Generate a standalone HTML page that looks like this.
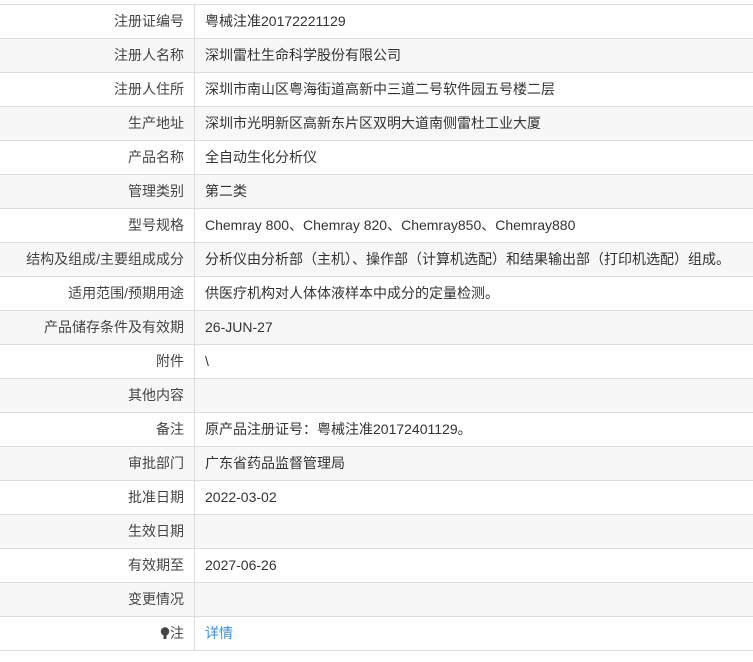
<!DOCTYPE html>
<html><head><meta charset="utf-8"><style>
body{margin:0;background:#fff;font-family:"Liberation Sans","Noto Sans CJK SC",sans-serif;font-size:14px;color:#333}
table{position:absolute;top:4px;left:0;width:753px;border-collapse:collapse;table-layout:fixed}
td{height:33px;border-top:1px solid #ddd;border-bottom:1px solid #ddd;padding:0;line-height:33px;white-space:nowrap;overflow:hidden}
td.k{width:184px;text-align:right;padding-right:10px;border-right:1px solid #ddd;color:#444}
td.v{padding-left:10px}
tr:nth-child(even) td{background:#f7f7f7}
a{color:#3a8ee6;text-decoration:none}
</style></head><body>
<table>
<tr><td class="k">注册证编号</td><td class="v">粤械注准20172221129</td></tr>
<tr><td class="k">注册人名称</td><td class="v">深圳雷杜生命科学股份有限公司</td></tr>
<tr><td class="k">注册人住所</td><td class="v">深圳市南山区粤海街道高新中三道二号软件园五号楼二层</td></tr>
<tr><td class="k">生产地址</td><td class="v">深圳市光明新区高新东片区双明大道南侧雷杜工业大厦</td></tr>
<tr><td class="k">产品名称</td><td class="v">全自动生化分析仪</td></tr>
<tr><td class="k">管理类别</td><td class="v">第二类</td></tr>
<tr><td class="k">型号规格</td><td class="v">Chemray 800、Chemray 820、Chemray850、Chemray880</td></tr>
<tr><td class="k">结构及组成/主要组成成分</td><td class="v">分析仪由分析部（主机）、操作部（计算机选配）和结果输出部（打印机选配）组成。</td></tr>
<tr><td class="k">适用范围/预期用途</td><td class="v">供医疗机构对人体体液样本中成分的定量检测。</td></tr>
<tr><td class="k">产品储存条件及有效期</td><td class="v">26-JUN-27</td></tr>
<tr><td class="k">附件</td><td class="v">\</td></tr>
<tr><td class="k">其他内容</td><td class="v"></td></tr>
<tr><td class="k">备注</td><td class="v">原产品注册证号：粤械注准20172401129。</td></tr>
<tr><td class="k">审批部门</td><td class="v">广东省药品监督管理局</td></tr>
<tr><td class="k">批准日期</td><td class="v">2022-03-02</td></tr>
<tr><td class="k">生效日期</td><td class="v"></td></tr>
<tr><td class="k">有效期至</td><td class="v">2027-06-26</td></tr>
<tr><td class="k">变更情况</td><td class="v"></td></tr>
<tr><td class="k"><svg width="10" height="13" viewBox="0 0 10 13" style="vertical-align:-2px"><circle cx="5" cy="4.5" r="4.2" fill="#444"/><rect x="3.5" y="8" width="3" height="4" fill="#444"/></svg>注</td><td class="v"><a>详情</a></td></tr>
</table>
</body></html>
